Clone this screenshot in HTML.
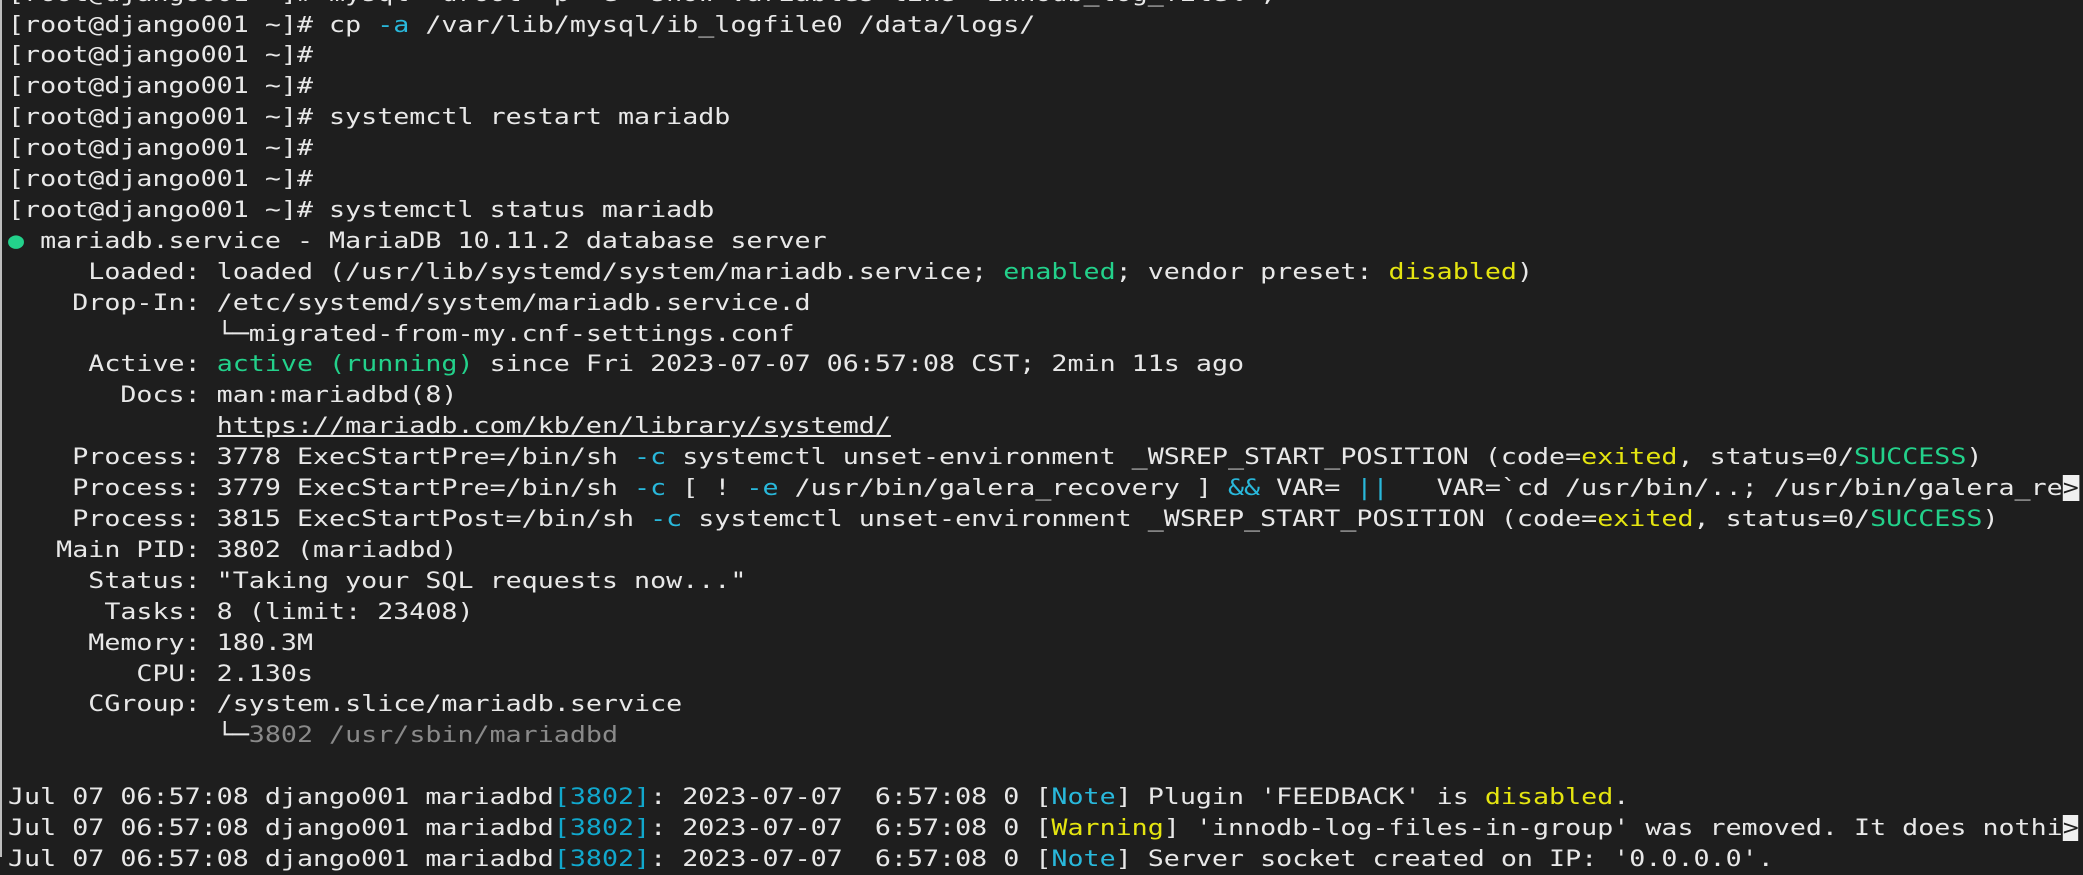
<!DOCTYPE html>
<html><head><meta charset="utf-8"><style>
html,body{margin:0;padding:0;background:#1e1e1e;width:2083px;height:857px;overflow:hidden;}
.b{position:absolute;left:0;top:0;width:2px;height:857px;background:#bdbdbd;}
pre{position:absolute;left:8px;top:-21.4px;margin:0;font-family:"DejaVu Sans Mono","Liberation Mono",monospace;font-size:22.5px;line-height:30.9px;color:#e8e8e8;white-space:pre;transform:scaleX(1.185);transform-origin:0 0;}
.c{color:#29b8db}.d{color:#11a8cd}.g{color:#23d18b}.y{color:#e5e510}.k{color:#8a8a8a}.u{text-decoration:underline}
.r{background:#f0f0f0;color:#1e1e1e}
</style></head><body><div class="b"></div>
<pre>[root@django001 ~]# mysql -uroot -p -e "show variables like 'innodb_log_file%';"
[root@django001 ~]# cp <span class="c">-a</span> /var/lib/mysql/ib_logfile0 /data/logs/
[root@django001 ~]#
[root@django001 ~]#
[root@django001 ~]# systemctl restart mariadb
[root@django001 ~]#
[root@django001 ~]#
[root@django001 ~]# systemctl status mariadb
<span class="g">●</span> mariadb.service - MariaDB 10.11.2 database server
     Loaded: loaded (/usr/lib/systemd/system/mariadb.service; <span class="g">enabled</span>; vendor preset: <span class="y">disabled</span>)
    Drop-In: /etc/systemd/system/mariadb.service.d
             └─migrated-from-my.cnf-settings.conf
     Active: <span class="g">active (running)</span> since Fri 2023-07-07 06:57:08 CST; 2min 11s ago
       Docs: man:mariadbd(8)
             <span class="u">https://mariadb.com/kb/en/library/systemd/</span>
    Process: 3778 ExecStartPre=/bin/sh <span class="c">-c</span> systemctl unset-environment _WSREP_START_POSITION (code=<span class="y">exited</span>, status=0/<span class="g">SUCCESS</span>)
    Process: 3779 ExecStartPre=/bin/sh <span class="c">-c</span> [ ! <span class="c">-e</span> /usr/bin/galera_recovery ] <span class="c">&amp;&amp;</span> VAR= <span class="c">||</span>   VAR=`cd /usr/bin/..; /usr/bin/galera_re<span class="r">&gt;</span>
    Process: 3815 ExecStartPost=/bin/sh <span class="c">-c</span> systemctl unset-environment _WSREP_START_POSITION (code=<span class="y">exited</span>, status=0/<span class="g">SUCCESS</span>)
   Main PID: 3802 (mariadbd)
     Status: "Taking your SQL requests now..."
      Tasks: 8 (limit: 23408)
     Memory: 180.3M
        CPU: 2.130s
     CGroup: /system.slice/mariadb.service
             └─<span class="k">3802 /usr/sbin/mariadbd</span>

Jul 07 06:57:08 django001 mariadbd<span class="d">[3802]</span>: 2023-07-07  6:57:08 0 [<span class="c">Note</span>] Plugin 'FEEDBACK' is <span class="y">disabled</span>.
Jul 07 06:57:08 django001 mariadbd<span class="d">[3802]</span>: 2023-07-07  6:57:08 0 [<span class="y">Warning</span>] 'innodb-log-files-in-group' was removed. It does nothi<span class="r">&gt;</span>
Jul 07 06:57:08 django001 mariadbd<span class="d">[3802]</span>: 2023-07-07  6:57:08 0 [<span class="c">Note</span>] Server socket created on IP: '0.0.0.0'.
</pre></body></html>
